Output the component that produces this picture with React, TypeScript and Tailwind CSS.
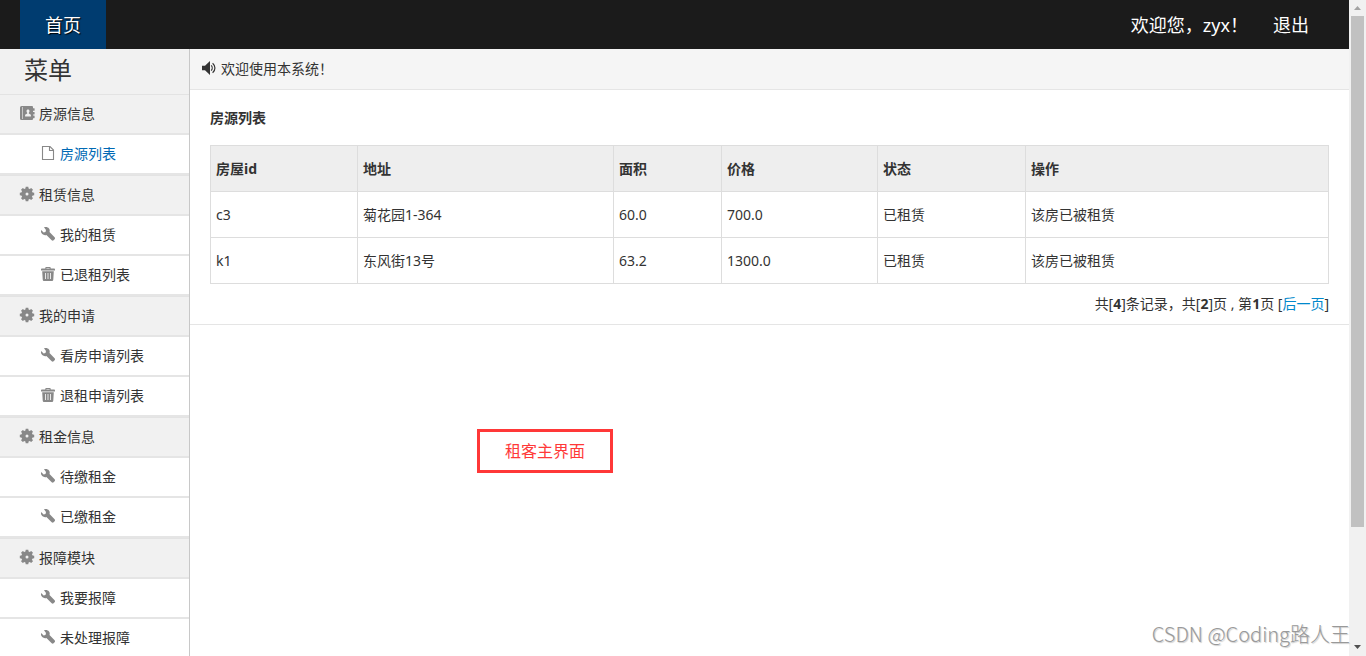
import type { ReactNode } from 'react';

type IconName = 'book' | 'file' | 'cog' | 'wrench' | 'trash' | 'volume';

const COG_ANGLES = [0, 45, 90, 135, 180, 225, 270, 315];

const ICONS: Record<IconName, ReactNode> = {
  book: (
    <path
      fillRule="evenodd"
      d="M1.5 0H12a1 1 0 0 1 1 1v1.2h1.2a.4.4 0 0 1 .4.4v1.8a.4.4 0 0 1-.4.4H13v1.1h1.2a.4.4 0 0 1 .4.4v1.8a.4.4 0 0 1-.4.4H13v1.1h1.2a.4.4 0 0 1 .4.4v1.8a.4.4 0 0 1-.4.4H13V13a1 1 0 0 1-1 1H1.5A1.5 1.5 0 0 1 0 12.5v-11A1.5 1.5 0 0 1 1.5 0zM2.4 1v12h.6V1zM8 3.4c-.9 0-1.5.7-1.5 1.6 0 .7.2 1.300.7 1.700v.7L5.500 8.400c-.3.200-.4.400-.4.700v1.300h5.800V9.100c0-.3-.1-.5-.4-.7L8.800 7.400v-.7c.5-.4.7-1 .7-1.700 0-.9-.6-1.600-1.500-1.600z"
    />
  ),
  file: (
    <path
      d="M1.500 .5H9L12.500 4V13.500H1.500zM8.500 .5V4.500H12.500"
      fill="none"
      stroke="currentColor"
      strokeWidth="1.100"
    />
  ),
  cog: (
    <>
      <circle cx="7" cy="7" r="3.600" fill="none" stroke="currentColor" strokeWidth="4.200" />
      {COG_ANGLES.map((a) => (
        <path key={a} d="M5.300 2.500 5.700 -.2H8.300L8.700 2.500z" transform={`rotate(${a} 7 7)`} />
      ))}
    </>
  ),
  wrench: (
    <path d="M3 .3C4.900-.4 6.900 0 8 1.500c.8 1.100.9 2.300.5 3.500l5.100 5.300c.6.600.6 1.300 0 1.900l-1 1c-.6.600-1.300.6-1.900 0L5.400 8c-1.400.4-3.100.2-4.200-.9C.1 6-.3 4.600.1 3.100l2.500 2.300 1.900-.4.500-2z" />
  ),
  trash: (
    <path
      fillRule="evenodd"
      d="M4.300 1.600V.8c0-.5.300-.8.800-.8h3.800c.5 0 .8.300.8.800v.8h3.500c.5 0 .8.300.8.700v1.100H0V2.300c0-.4.300-.7.800-.7zm1.100-.6v.6h3.200V1zM1.200 4.200h11.600l-.5 8.200c-.1 1-.7 1.600-1.600 1.600H3.300c-.9 0-1.500-.6-1.600-1.600zM4.100 5.900v6h.8v-6zm2.500 0v6h.8v-6zm2.500 0v6h.8v-6z"
    />
  ),
  volume: (
    <>
      <path d="M0 4.700h3L8 0v14L3 9.300H0z" />
      <path
        d="M9.200 4.400c1.300 1.400 1.300 3.800 0 5.200M10.600 2.200c3.100 2.600 3.100 7 0 9.600"
        fill="none"
        stroke="currentColor"
        strokeWidth="1.200"
      />
    </>
  ),
};

function Icon({ name }: { name: IconName }) {
  return (
    <svg
      viewBox="0 0 14 14"
      className="-mt-0.5 size-3.5 shrink-0 overflow-visible"
      fill="currentColor"
      aria-hidden="true"
    >
      {ICONS[name]}
    </svg>
  );
}

interface MenuItem {
  label: string;
  icon: IconName;
  active?: boolean;
}

interface MenuGroup extends MenuItem {
  items: MenuItem[];
}

const MENU: MenuGroup[] = [
  {
    label: '房源信息',
    icon: 'book',
    items: [{ label: '房源列表', icon: 'file', active: true }],
  },
  {
    label: '租赁信息',
    icon: 'cog',
    items: [
      { label: '我的租赁', icon: 'wrench' },
      { label: '已退租列表', icon: 'trash' },
    ],
  },
  {
    label: '我的申请',
    icon: 'cog',
    items: [
      { label: '看房申请列表', icon: 'wrench' },
      { label: '退租申请列表', icon: 'trash' },
    ],
  },
  {
    label: '租金信息',
    icon: 'cog',
    items: [
      { label: '待缴租金', icon: 'wrench' },
      { label: '已缴租金', icon: 'wrench' },
    ],
  },
  {
    label: '报障模块',
    icon: 'cog',
    items: [
      { label: '我要报障', icon: 'wrench' },
      { label: '未处理报障', icon: 'wrench' },
    ],
  },
];

const COLUMNS = [
  { label: '房屋id', width: 'w-[147px]' },
  { label: '地址', width: 'w-[256px]' },
  { label: '面积', width: 'w-[108px]' },
  { label: '价格', width: 'w-[156px]' },
  { label: '状态', width: 'w-[148px]' },
  { label: '操作', width: '' },
];

const ROWS = [
  ['c3', '菊花园1-364', '60.0', '700.0', '已租赁', '该房已被租赁'],
  ['k1', '东风街13号', '63.2', '1300.0', '已租赁', '该房已被租赁'],
];

function TopBar() {
  return (
    <header className="flex h-[49px] shrink-0 items-stretch justify-between bg-[#1b1b1b] pr-4 pl-5 text-lg text-white">
      <a
        href="#home"
        className="flex items-center bg-[#003c70] px-[25px] [text-shadow:1px_1px_1px_#000]"
      >
        首页
      </a>
      <nav className="flex items-stretch">
        <span className="flex items-center pr-[25px]">欢迎您，zyx！</span>
        <a href="#logout" className="flex items-center pr-6">
          退出
        </a>
      </nav>
    </header>
  );
}

function Sidebar() {
  return (
    <aside className="w-[190px] shrink-0 overflow-hidden border-r border-[#c8c8c8] bg-[#f1f1f1]">
      <h2 className="flex h-[45px] items-center pb-1 pl-6 text-2xl">菜单</h2>
      <ul>
        {MENU.map((group) => (
          <li key={group.label} className="border-t border-b-2 border-t-[#e3e3e3] border-b-[#e5e5e5]">
            <a href="#group" className="flex h-[38px] items-center gap-[5px] pl-5">
              <span className="text-[#888]">
                <Icon name={group.icon} />
              </span>
              {group.label}
            </a>
            <ul>
              {group.items.map((item) => (
                <li key={item.label} className="border-t-2 border-[#e5e5e5] bg-white">
                  <a
                    href="#item"
                    className={`flex h-[38px] items-center gap-[5px] pl-[41px] ${
                      item.active ? 'text-[#0069b4]' : ''
                    }`}
                  >
                    <span className="text-[#888]">
                      <Icon name={item.icon} />
                    </span>
                    {item.label}
                  </a>
                </li>
              ))}
            </ul>
          </li>
        ))}
      </ul>
    </aside>
  );
}

function HouseTable() {
  return (
    <table className="w-full table-fixed border-collapse text-left">
      <thead>
        <tr className="h-[46px] bg-[#eee]">
          {COLUMNS.map((column) => (
            <th
              key={column.label}
              scope="col"
              className={`border border-[#ddd] px-[5px] font-bold ${column.width}`}
            >
              {column.label}
            </th>
          ))}
        </tr>
      </thead>
      <tbody>
        {ROWS.map((row) => (
          <tr key={row[0]} className="h-[46px]">
            {row.map((cell, i) => (
              <td key={i} className="border border-[#ddd] px-[5px]">
                {cell}
              </td>
            ))}
          </tr>
        ))}
      </tbody>
    </table>
  );
}

function Content() {
  return (
    <main className="min-w-0 flex-1">
      <p className="flex h-[41px] items-center gap-[5px] border-b border-[#e5e5e5] bg-[#f5f5f5] pl-3">
        <Icon name="volume" />
        欢迎使用本系统！
      </p>
      <section className="border-b border-[#e5e5e5] px-5 pt-[18px] pb-2.5">
        <h1 className="mb-[17px] font-bold">房源列表</h1>
        <HouseTable />
        <p className="mt-2.5 text-right">
          共[<b>4</b>]条记录，共[<b>2</b>]页 , 第<b>1</b>页 [
          <a href="#next" className="text-[#08c]">
            后一页
          </a>
          ]
        </p>
      </section>
    </main>
  );
}

function ScrollRail() {
  return (
    <div className="flex w-[17px] shrink-0 flex-col bg-[#f1f1f1] px-0.5" aria-hidden="true">
      <svg viewBox="0 0 13 16" className="h-4 w-full shrink-0">
        <path d="M3 10 6.500 6 10 10z" fill="#a3a3a3" />
      </svg>
      <div className="flex-1">
        <div className="h-[82%] bg-[#c1c1c1]" />
      </div>
      <svg viewBox="0 0 13 17" className="h-[17px] w-full shrink-0">
        <path d="M3 6 6.500 10 10 6z" fill="#505050" />
      </svg>
    </div>
  );
}

export default function App() {
  return (
    <div className="relative flex h-screen overflow-hidden bg-white font-['Noto_Sans','Noto_Sans_CJK_SC',sans-serif] text-sm/5 text-[#333]">
      <div className="flex min-w-0 flex-1 flex-col">
        <TopBar />
        <div className="flex min-h-0 flex-1">
          <Sidebar />
          <Content />
        </div>
      </div>
      <ScrollRail />
      <div className="absolute top-[429px] left-[477px] border-[3px] border-[#ff3838] px-[25px] py-[7px] text-base text-[#ff3838]">
        租客主界面
      </div>
      <div className="absolute right-4 bottom-2 font-['Noto_Sans_CJK_SC',sans-serif] text-xl/7 font-light text-[#999] [text-shadow:1px_1px_1px_#ccc]">
        CSDN @Coding路人王
      </div>
    </div>
  );
}
